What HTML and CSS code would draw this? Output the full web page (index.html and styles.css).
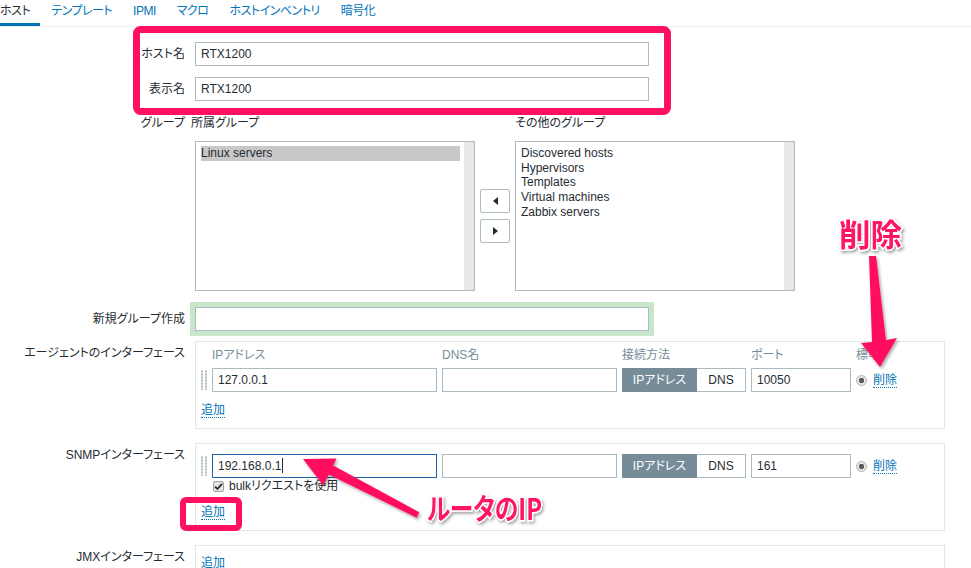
FILE: index.html
```html
<!DOCTYPE html>
<html lang="ja">
<head>
    <meta charset="UTF-8">
    <title>ホストの設定</title>
    <link rel="stylesheet" href="styles.css">
</head>
<body>
    <!-- Tabs -->
    <ul class="tabs">
        <li class="active">ホスト</li>
        <li>テンプレート</li>
        <li>IPMI</li>
        <li>マクロ</li>
        <li>ホストインベントリ</li>
        <li>暗号化</li>
    </ul>

    <!-- Host form -->
    <div class="form">
        <div class="row">
            <div class="label">ホスト名</div>
            <input class="text wide" type="text" value="RTX1200">
        </div>
        <div class="row row-visible">
            <div class="label">表示名</div>
            <input class="text wide" type="text" value="RTX1200">
        </div>

        <div class="row row-groups">
            <div class="label label-head">グループ</div>
            <div class="groups">
                <div class="group-head own">所属グループ</div>
                <div></div>
                <div class="group-head">その他のグループ</div>

                <div class="listbox">
                    <div class="option selected">Linux servers</div>
                </div>
                <div class="move-btns">
                    <button class="move"><svg width="5" height="8" viewBox="0 0 5 8"><polygon points="5,0 5,8 0,4" fill="#1f2c33"/></svg></button>
                    <button class="move"><svg width="5" height="8" viewBox="0 0 5 8"><polygon points="0,0 0,8 5,4" fill="#1f2c33"/></svg></button>
                </div>
                <div class="listbox">
                    <div class="option">Discovered hosts</div>
                    <div class="option">Hypervisors</div>
                    <div class="option">Templates</div>
                    <div class="option">Virtual machines</div>
                    <div class="option">Zabbix servers</div>
                </div>
            </div>
        </div>

        <div class="row row-newgroup">
            <div class="label">新規グループ作成</div>
            <input class="text wide glow" type="text" value="">
        </div>

        <!-- Agent interfaces -->
        <div class="row row-iface">
            <div class="label">エージェントのインターフェース</div>
            <div class="iface">
                <div class="iface-grid head">
                    <span></span>
                    <span>IPアドレス</span>
                    <span>DNS名</span>
                    <span>接続方法</span>
                    <span>ポート</span>
                    <span class="head-default">標準</span>
                </div>
                <div class="iface-grid line">
                    <span class="handle"></span>
                    <input class="text" type="text" value="127.0.0.1">
                    <input class="text" type="text" value="">
                    <div class="seg"><span class="on">IPアドレス</span><span class="off">DNS</span></div>
                    <input class="text" type="text" value="10050">
                    <span class="radio"></span>
                    <a class="link" href="#">削除</a>
                </div>
                <div class="add-row"><a class="link" href="#">追加</a></div>
            </div>
        </div>

        <!-- SNMP interfaces -->
        <div class="row row-iface">
            <div class="label">SNMPインターフェース</div>
            <div class="iface snmp">
                <div class="iface-grid line">
                    <span class="handle"></span>
                    <div class="text focused">192.168.0.1<span class="caret"></span></div>
                    <input class="text" type="text" value="">
                    <div class="seg"><span class="on">IPアドレス</span><span class="off">DNS</span></div>
                    <input class="text" type="text" value="161">
                    <span class="radio"></span>
                    <a class="link" href="#">削除</a>
                </div>
                <div class="bulk">
                    <span class="check"><svg width="9" height="9" viewBox="0 0 9 9"><path d="M1 4.6 L3.4 7 L8 1.8" fill="none" stroke="#2d2d2d" stroke-width="1.8"/></svg></span>
                    bulkリクエストを使用
                </div>
                <div class="add-row"><a class="link" href="#">追加</a></div>
            </div>
        </div>

        <!-- JMX interfaces -->
        <div class="row row-iface">
            <div class="label">JMXインターフェース</div>
            <div class="iface jmx">
                <div class="add-row"><a class="link" href="#">追加</a></div>
            </div>
        </div>
    </div>

    <!-- Annotations drawn over the screenshot -->
    <svg class="notes" width="971" height="568" viewBox="0 0 971 568">
        <defs>
            <filter id="shade" x="-20%" y="-20%" width="140%" height="140%">
                <feDropShadow dx="1.5" dy="2" stdDeviation="1.5" flood-color="#000" flood-opacity="0.35"/>
            </filter>
        </defs>
        <rect x="136.5" y="29.5" width="531" height="82" rx="4" class="note-box"/>
        <rect x="183" y="500" width="56" height="28" rx="3" class="note-box thin"/>

        <polygon class="note-arrow" points="869,256 876,256 886,340 897,338 880,367 861,343 872,342"/>
        <polygon class="note-arrow" points="419.3,512.3 333.2,465.4 336.5,458.6 303,459 323.3,485.6 328.8,474.4 416.7,517.7"/>

        <text class="note-text" x="839" y="246" font-size="31" textLength="63" lengthAdjust="spacingAndGlyphs">削除</text>
        <text class="note-text" x="427" y="520" font-size="29" textLength="115" lengthAdjust="spacingAndGlyphs">ルータのIP</text>
    </svg>
</body>
</html>
```

FILE: styles.css
```css
* {
    box-sizing: border-box;
}

body {
    margin: 0;
    width: 971px;
    height: 568px;
    overflow: hidden;
    position: relative;
    background-color: #fff;
    color: #1f2c33;
    font-family: "Liberation Sans", "Noto Sans CJK JP", sans-serif;
    font-size: 12px;
    font-feature-settings: "palt";
}

/* Tabs */
.tabs {
    list-style: none;
    margin: 0 0 0 -11px;
    padding: 0;
    display: flex;
    height: 27px;
    border-bottom: 1px solid #ebeef0;
}

.tabs li {
    height: 26px;
    padding: 0 10px 0 11px;
    line-height: 22px;
    letter-spacing: -0.5px;
    color: #0275b8;
    white-space: nowrap;
}

.tabs li.active {
    color: #1f2c33;
    border-bottom: 3px solid #0275b8;
}

/* Form layout */
.form {
    padding-top: 15px;
}

.row {
    display: grid;
    grid-template-columns: 185px 1fr;
    column-gap: 10px;
    align-items: start;
}

.row-visible {
    margin-top: 11px;
}

.row-groups {
    margin-top: 15px;
}

.row-newgroup {
    margin-top: 16px;
}

.row-iface {
    margin-top: 10px;
}

.row-iface + .row-iface {
    margin-top: 14px;
}

.label {
    text-align: right;
    line-height: 24px;
    white-space: nowrap;
}

.label-head {
    line-height: 14px;
}

/* Inputs */
.text {
    display: block;
    height: 24px;
    padding: 0 5px;
    border: 1px solid #acbbc2;
    background-color: #fff;
    color: #1f2c33;
    font: inherit;
    line-height: 22px;
    outline: none;
}

.text.wide {
    width: 454px;
}

.text.glow {
    box-shadow: 0 0 0 5px #c8e6c9;
}

.text.focused {
    border-color: #1f65a6;
}

.caret {
    display: inline-block;
    width: 1px;
    height: 15px;
    margin-left: 1px;
    vertical-align: -3px;
    background-color: #1f2c33;
}

/* Groups */
.groups {
    display: grid;
    grid-template-columns: 280px 30px 280px;
    column-gap: 5px;
    row-gap: 11px;
}

.group-head {
    line-height: 14px;
    white-space: nowrap;
}

.group-head.own {
    margin-left: -4px;
}

.listbox {
    height: 150px;
    padding: 4px 14px 0 5px;
    border: 1px solid #acbbc2;
    box-shadow: inset -10px 0 0 #e8e8e8;
}

.option {
    line-height: 14.7px;
    white-space: nowrap;
}

.option.selected {
    background-color: #c8c8c8;
}

.move-btns {
    display: flex;
    flex-direction: column;
    justify-content: center;
    gap: 6px;
}

.move {
    width: 30px;
    height: 24px;
    padding: 0;
    border: 1px solid #acbbc2;
    border-radius: 2px;
    background-color: #fff;
    display: flex;
    align-items: center;
    justify-content: center;
}

/* Interfaces */
.iface {
    width: 750px;
    height: 88px;
    padding: 4px 5px 0;
    border: 1px solid #e4e7e9;
}

.iface.snmp {
    padding-top: 10px;
}

.iface.jmx {
    height: 40px;
    padding-top: 10px;
}

.iface-grid {
    display: grid;
    grid-template-columns: 6px 225px 175px 124px 100px 12px auto;
    column-gap: 5px;
    align-items: center;
    justify-items: start;
}

.iface-grid.head {
    line-height: 18px;
    color: #768d99;
    white-space: nowrap;
}

.iface-grid.line {
    margin-top: 4px;
}

.iface.snmp .iface-grid.line {
    margin-top: 0;
}

.iface-grid .text {
    width: 100%;
}

.handle {
    width: 6px;
    height: 20px;
    background-image: radial-gradient(circle, #b5c1c7 1px, transparent 1.3px);
    background-size: 4px 3px;
    background-position: -1px 0;
}

.seg {
    display: flex;
    height: 24px;
}

.seg span {
    line-height: 22px;
    text-align: center;
    border: 1px solid #acbbc2;
}

.seg .on {
    width: 75px;
    color: #fff;
    background-color: #768d99;
    border-color: #768d99;
}

.seg .off {
    width: 49px;
    border-left: none;
}

.radio {
    width: 11px;
    height: 11px;
    border-radius: 50%;
    border: 1px solid #b4b4b4;
    background: radial-gradient(circle, #5a5a5a 2.4px, #e6e6e6 3px);
}

.link {
    color: #0275b8;
    text-decoration: none;
    line-height: 14px;
    border-bottom: 1px dotted #0275b8;
}

.add-row {
    margin-top: 11px;
    height: 15px;
}

.add-row .link {
    display: inline-block;
}

.iface.jmx .add-row {
    margin-top: 0;
}

.bulk {
    margin: 1px 0 0 12px;
    line-height: 14px;
    display: flex;
    align-items: center;
    gap: 5px;
}

.check {
    width: 11px;
    height: 11px;
    border: 1px solid #9aa4a9;
    border-radius: 2px;
    background-color: #e4e4e4;
    display: flex;
    align-items: center;
    justify-content: center;
}

.iface.snmp .add-row {
    margin-top: 12px;
}

/* Annotation layer */
.notes {
    position: absolute;
    top: 0;
    left: 0;
    pointer-events: none;
}

.note-box {
    fill: none;
    stroke: #ff1060;
    stroke-width: 7;
}

.note-box.thin {
    stroke-width: 6;
}

.note-arrow {
    fill: #ff1060;
    filter: url(#shade);
}

.note-text {
    font-family: "Noto Sans CJK JP", sans-serif;
    font-weight: 700;
    fill: #ff1463;
    stroke: #fff;
    stroke-width: 3;
    paint-order: stroke;
    filter: url(#shade);
}
```
